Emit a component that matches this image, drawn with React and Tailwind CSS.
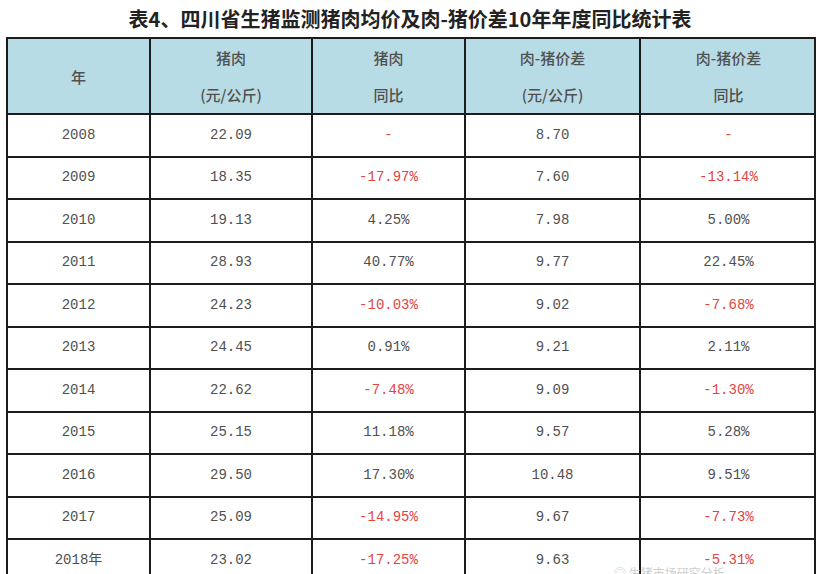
const rows = [
  ["2008", "22.09", "-", "8.70", "-"],
  ["2009", "18.35", "-17.97%", "7.60", "-13.14%"],
  ["2010", "19.13", "4.25%", "7.98", "5.00%"],
  ["2011", "28.93", "40.77%", "9.77", "22.45%"],
  ["2012", "24.23", "-10.03%", "9.02", "-7.68%"],
  ["2013", "24.45", "0.91%", "9.21", "2.11%"],
  ["2014", "22.62", "-7.48%", "9.09", "-1.30%"],
  ["2015", "25.15", "11.18%", "9.57", "5.28%"],
  ["2016", "29.50", "17.30%", "10.48", "9.51%"],
  ["2017", "25.09", "-14.95%", "9.67", "-7.73%"],
  ["2018年", "23.02", "-17.25%", "9.63", "-5.31%"],
];

const cols = "grid grid-cols-[143px_162px_153px_175px_175px]";

function Cell({ children, red, last }) {
  return (
    <div
      className={`flex items-center justify-center border-b-2 border-[#1c1c1c] ${
        last ? "" : "border-r-2"
      } ${red ? "text-[#e2453f]" : "text-[#505050]"}`}
    >
      {children}
    </div>
  );
}

export default function App() {
  return (
    <div className="relative w-[820px] h-[574px] overflow-hidden bg-white">
      <h1 className="pt-[6px] h-[37px] text-center text-[20px] font-bold text-[#222] font-['Noto_Sans_CJK_SC',sans-serif] leading-[26px]">
        表4、四川省生猪监测猪肉均价及肉-猪价差10年年度同比统计表
      </h1>

      <div className="ml-[6px] w-[810px] border-l-2 border-t-2 border-r-2 border-[#1c1c1c]">
        {/* header */}
        <div className={`${cols} h-[76px] bg-[#b8dce6] text-[15px] text-[#2e2e2e] font-medium font-['Noto_Sans_CJK_SC',sans-serif] leading-[37px]`}>
          <Cell>年</Cell>
          <Cell>
            <div className="text-center">
              猪肉
              <br />
              (元/公斤)
            </div>
          </Cell>
          <Cell>
            <div className="text-center">
              猪肉
              <br />
              同比
            </div>
          </Cell>
          <Cell>
            <div className="text-center">
              肉-猪价差
              <br />
              (元/公斤)
            </div>
          </Cell>
          <Cell last>
            <div className="text-center">
              肉-猪价差
              <br />
              同比
            </div>
          </Cell>
        </div>

        {/* body */}
        {rows.map((r) => (
          <div
            key={r[0]}
            className={`${cols} h-[42.5px] text-[14px] font-['Liberation_Mono','Noto_Sans_CJK_SC',monospace]`}
          >
            {r.map((v, i) => (
              <Cell key={i} last={i === 4} red={(i === 2 || i === 4) && v.startsWith("-")}>
                {v}
              </Cell>
            ))}
          </div>
        ))}
      </div>

      {/* watermark, clipped by the bottom edge */}
      <div className="absolute left-[614px] top-[566px] whitespace-nowrap text-[12px] leading-[14px] text-[#cfcfcf] font-['Noto_Sans_CJK_SC',sans-serif]">
        ◎ 生猪市场研究分析
      </div>
    </div>
  );
}
